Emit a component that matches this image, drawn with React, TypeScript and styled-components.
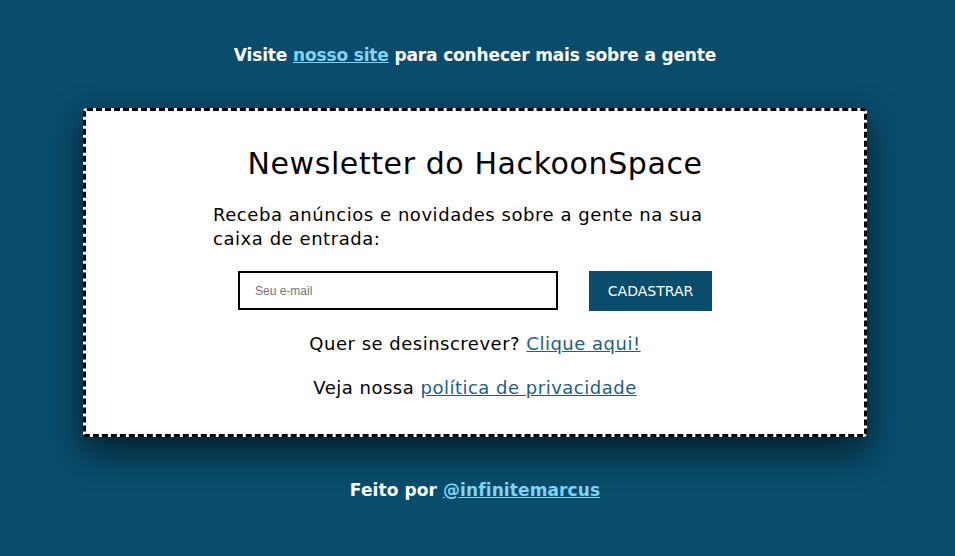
import React from "react";
import styled, { createGlobalStyle } from "styled-components";

const Global = createGlobalStyle`
  html, body { margin: 0; padding: 0; }
  body {
    background: #094c6b;
    font-family: "DejaVu Sans", "Noto Sans", sans-serif;
    min-height: 556px;
  }
`;

const Page = styled.div`
  display: flex;
  flex-direction: column;
  align-items: center;
  padding: 44px 5px 0 0;
`;

const Banner = styled.p`
  margin: 0;
  color: #ffffff;
  font-size: 17px;
  font-weight: 600;
  line-height: 22px;
  letter-spacing: -0.15px;
`;

const LightLink = styled.a`
  color: #82d2f5;
  text-decoration: underline;
`;

const Card = styled.section`
  margin-top: 42px;
  width: 784px;
  box-sizing: border-box;
  background: #ffffff;
  border: 3px dashed #000000;
  border-radius: 4px;
  box-shadow: 0 14px 34px rgba(0, 0, 0, 0.6);
  padding: 35px 0 34px;
  display: flex;
  flex-direction: column;
  align-items: center;
`;

const Title = styled.h1`
  margin: 0;
  font-size: 30px;
  font-weight: 400;
  line-height: 36px;
  color: #000;
  letter-spacing: 0.6px;
`;

const Lead = styled.p`
  margin: 21px 0 0;
  width: 524px;
  font-size: 18px;
  line-height: 24px;
  color: #000;
  letter-spacing: 0.55px;
`;

const Form = styled.form`
  margin-top: 20px;
  display: flex;
  gap: 31px;
`;

const Email = styled.input`
  width: 320px;
  height: 39px;
  box-sizing: border-box;
  border: 2px solid #000;
  padding: 0 15px;
  font-family: "Liberation Sans", Arial, sans-serif;
  font-size: 12px;
  outline: none;
  &::placeholder { color: #757575; }
`;

const Submit = styled.button`
  width: 123px;
  height: 40px;
  border: none;
  background: #094c6b;
  color: #ffffff;
  font-family: "DejaVu Sans", "Noto Sans", sans-serif;
  font-size: 14px;
  letter-spacing: 0;
  cursor: pointer;
`;

const Note = styled.p<{ $top: number }>`
  margin: ${(p) => p.$top}px 0 0;
  font-size: 18px;
  line-height: 24px;
  color: #000;
  letter-spacing: 0.5px;
`;

const DarkLink = styled.a`
  color: #1d5f85;
  text-decoration: underline;
`;

const Footer = styled.p`
  margin: 42px 0 0;
  color: #fff;
  font-size: 17px;
  font-weight: 600;
  line-height: 22px;
  letter-spacing: 0.1px;
`;

export default function App() {
  return (
    <>
      <Global />
      <Page>
        <Banner>
          Visite <LightLink href="#">nosso site</LightLink> para conhecer mais sobre a gente
        </Banner>
        <Card>
          <Title>Newsletter do HackoonSpace</Title>
          <Lead>Receba anúncios e novidades sobre a gente na sua caixa de entrada:</Lead>
          <Form onSubmit={(e) => e.preventDefault()}>
            <Email type="email" placeholder="Seu e-mail" />
            <Submit type="submit">CADASTRAR</Submit>
          </Form>
          <Note $top={21}>
            Quer se desinscrever? <DarkLink href="#">Clique aqui!</DarkLink>
          </Note>
          <Note $top={20}>
            Veja nossa <DarkLink href="#">política de privacidade</DarkLink>
          </Note>
        </Card>
        <Footer>
          Feito por <LightLink href="#">@infinitemarcus</LightLink>
        </Footer>
      </Page>
    </>
  );
}
